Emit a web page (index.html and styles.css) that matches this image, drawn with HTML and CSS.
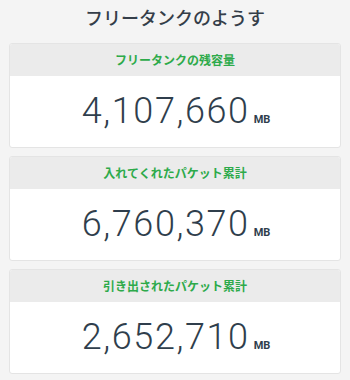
FILE: index.html
```html
<html>
	<head>
		<title>フリータンクのようす</title>
		<meta charset="utf-8" />
		<link rel="stylesheet" href="styles.css">
	</head>
	<body>
		<h1 class="header">フリータンクのようす</h1>
		<div class="card">
			<div class="card-head">フリータンクの残容量</div>
			<div class="card-body"><span class="num">4,107,660</span><span class="unit">MB</span></div>
		</div>
		<div class="card">
			<div class="card-head">入れてくれたパケット累計</div>
			<div class="card-body"><span class="num">6,760,370</span><span class="unit">MB</span></div>
		</div>
		<div class="card">
			<div class="card-head">引き出されたパケット累計</div>
			<div class="card-body"><span class="num">2,652,710</span><span class="unit">MB</span></div>
		</div>
	</body>
</html>
```

FILE: styles.css
```css
body {
	margin: 0;
	padding: 0 8px;
	background: #f4f4f4;
	font-family: "Noto Sans CJK JP", sans-serif;
	color: #36424e;
}
.header {
	margin: 0;
	height: 35px;
	line-height: 34px;
	font-size: 18px;
	font-weight: 500;
	text-align: center;
	color: #343e49;
}
.card {
	margin: 8px 1px 0 1px;
	border: solid #e4e4e4 1px;
	border-radius: 3px;
	background: #fff;
	overflow: hidden;
}
.card-head {
	height: 32px;
	line-height: 32px;
	background: #ebebeb;
	color: #2daa4a;
	font-size: 12px;
	font-weight: bold;
	text-align: center;
}
.card-body {
	height: 71px;
	display: flex;
	justify-content: center;
	align-items: baseline;
	line-height: 71px;
	padding-left: 2px;
}
.num {
	font-family: "Roboto", sans-serif;
	font-weight: 300;
	font-size: 36px;
	color: #2f3e4c;
	letter-spacing: 1.6px;
}
.unit {
	font-family: "Roboto", sans-serif;
	font-size: 11px;
	font-weight: bold;
	margin-left: 4px;
	color: #2f3e4c;
}
```
